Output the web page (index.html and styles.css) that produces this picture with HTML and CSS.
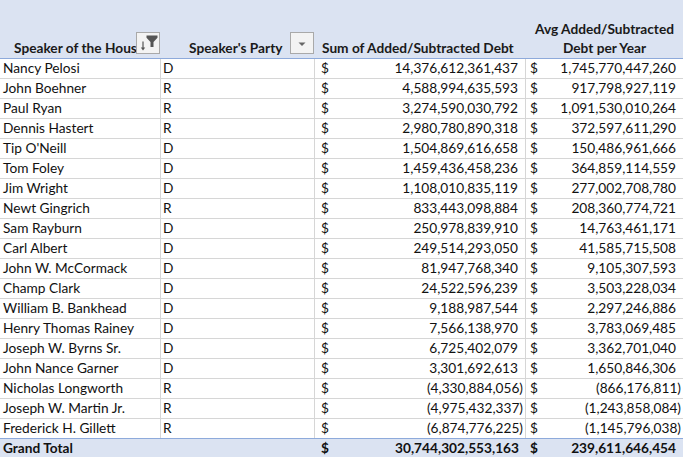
FILE: index.html
```html
<!DOCTYPE html>
<html>
<head>
<meta charset="utf-8">
<link rel="stylesheet" href="styles.css">
</head>
<body>
<table class="pivot">
  <colgroup>
    <col class="c-name"><col class="c-party"><col class="c-sum"><col class="c-avg">
  </colgroup>
  <thead>
    <tr>
      <th class="h-name"><span class="hl">Speaker of the House</span>
        <span class="fbtn">
          <svg width="22" height="20" viewBox="1 1 22 20"><path d="M10.5 3.5h11v2.2l-4 4.3v5h-3v-5l-4-4.3z" fill="#555"/><path d="M7 9.5v7.5" stroke="#555" stroke-width="1.2"/><path d="M4.8 15.5l2.2 3 2.2-3z" fill="#555"/></svg>
        </span>
      </th>
      <th class="h-party"><span class="hl">Speaker's Party</span>
        <span class="fbtn">
          <svg width="22" height="20" viewBox="1 1 22 20"><path d="M8.5 10.5h7l-3.5 3.5z" fill="#666"/></svg>
        </span>
      </th>
      <th class="h-sum">Sum of Added/Subtracted Debt</th>
      <th class="h-avg">Avg Added/Subtracted<br>Debt per Year</th>
    </tr>
  </thead>
  <tbody>
    <tr><td>Nancy Pelosi</td><td>D</td><td class="acct a3"><div class="ac"><span>$</span><span class="pos">14,376,612,361,437</span></div></td><td class="acct a4"><div class="ac"><span>$</span><span class="pos">1,745,770,447,260</span></div></td></tr>
    <tr><td>John Boehner</td><td>R</td><td class="acct a3"><div class="ac"><span>$</span><span class="pos">4,588,994,635,593</span></div></td><td class="acct a4"><div class="ac"><span>$</span><span class="pos">917,798,927,119</span></div></td></tr>
    <tr><td>Paul Ryan</td><td>R</td><td class="acct a3"><div class="ac"><span>$</span><span class="pos">3,274,590,030,792</span></div></td><td class="acct a4"><div class="ac"><span>$</span><span class="pos">1,091,530,010,264</span></div></td></tr>
    <tr><td>Dennis Hastert</td><td>R</td><td class="acct a3"><div class="ac"><span>$</span><span class="pos">2,980,780,890,318</span></div></td><td class="acct a4"><div class="ac"><span>$</span><span class="pos">372,597,611,290</span></div></td></tr>
    <tr><td>Tip O'Neill</td><td>D</td><td class="acct a3"><div class="ac"><span>$</span><span class="pos">1,504,869,616,658</span></div></td><td class="acct a4"><div class="ac"><span>$</span><span class="pos">150,486,961,666</span></div></td></tr>
    <tr><td>Tom Foley</td><td>D</td><td class="acct a3"><div class="ac"><span>$</span><span class="pos">1,459,436,458,236</span></div></td><td class="acct a4"><div class="ac"><span>$</span><span class="pos">364,859,114,559</span></div></td></tr>
    <tr><td>Jim Wright</td><td>D</td><td class="acct a3"><div class="ac"><span>$</span><span class="pos">1,108,010,835,119</span></div></td><td class="acct a4"><div class="ac"><span>$</span><span class="pos">277,002,708,780</span></div></td></tr>
    <tr><td>Newt Gingrich</td><td>R</td><td class="acct a3"><div class="ac"><span>$</span><span class="pos">833,443,098,884</span></div></td><td class="acct a4"><div class="ac"><span>$</span><span class="pos">208,360,774,721</span></div></td></tr>
    <tr><td>Sam Rayburn</td><td>D</td><td class="acct a3"><div class="ac"><span>$</span><span class="pos">250,978,839,910</span></div></td><td class="acct a4"><div class="ac"><span>$</span><span class="pos">14,763,461,171</span></div></td></tr>
    <tr><td>Carl Albert</td><td>D</td><td class="acct a3"><div class="ac"><span>$</span><span class="pos">249,514,293,050</span></div></td><td class="acct a4"><div class="ac"><span>$</span><span class="pos">41,585,715,508</span></div></td></tr>
    <tr><td>John W. McCormack</td><td>D</td><td class="acct a3"><div class="ac"><span>$</span><span class="pos">81,947,768,340</span></div></td><td class="acct a4"><div class="ac"><span>$</span><span class="pos">9,105,307,593</span></div></td></tr>
    <tr><td>Champ Clark</td><td>D</td><td class="acct a3"><div class="ac"><span>$</span><span class="pos">24,522,596,239</span></div></td><td class="acct a4"><div class="ac"><span>$</span><span class="pos">3,503,228,034</span></div></td></tr>
    <tr><td>William B. Bankhead</td><td>D</td><td class="acct a3"><div class="ac"><span>$</span><span class="pos">9,188,987,544</span></div></td><td class="acct a4"><div class="ac"><span>$</span><span class="pos">2,297,246,886</span></div></td></tr>
    <tr><td>Henry Thomas Rainey</td><td>D</td><td class="acct a3"><div class="ac"><span>$</span><span class="pos">7,566,138,970</span></div></td><td class="acct a4"><div class="ac"><span>$</span><span class="pos">3,783,069,485</span></div></td></tr>
    <tr><td>Joseph W. Byrns Sr.</td><td>D</td><td class="acct a3"><div class="ac"><span>$</span><span class="pos">6,725,402,079</span></div></td><td class="acct a4"><div class="ac"><span>$</span><span class="pos">3,362,701,040</span></div></td></tr>
    <tr><td>John Nance Garner</td><td>D</td><td class="acct a3"><div class="ac"><span>$</span><span class="pos">3,301,692,613</span></div></td><td class="acct a4"><div class="ac"><span>$</span><span class="pos">1,650,846,306</span></div></td></tr>
    <tr><td>Nicholas Longworth</td><td>R</td><td class="acct a3"><div class="ac"><span>$</span><span>(4,330,884,056)</span></div></td><td class="acct a4"><div class="ac"><span>$</span><span>(866,176,811)</span></div></td></tr>
    <tr><td>Joseph W. Martin Jr.</td><td>R</td><td class="acct a3"><div class="ac"><span>$</span><span>(4,975,432,337)</span></div></td><td class="acct a4"><div class="ac"><span>$</span><span>(1,243,858,084)</span></div></td></tr>
    <tr><td>Frederick H. Gillett</td><td>R</td><td class="acct a3"><div class="ac"><span>$</span><span>(6,874,776,225)</span></div></td><td class="acct a4"><div class="ac"><span>$</span><span>(1,145,796,038)</span></div></td></tr>
  </tbody>
  <tfoot>
    <tr><td>Grand Total</td><td></td><td class="acct a3"><div class="ac"><span>$</span><span class="pos">30,744,302,553,163</span></div></td><td class="acct a4"><div class="ac"><span>$</span><span class="pos">239,611,646,454</span></div></td></tr>
  </tfoot>
</table>
</body>
</html>
```

FILE: styles.css
```css
html, body {
  margin: 0;
  padding: 0;
  background: #ffffff;
}

body {
  font-family: Lato, "Open Sans", "Liberation Sans", sans-serif;
  font-size: 13.7px;
  color: #111;
}

.pivot {
  border-collapse: separate;
  border-spacing: 0;
  table-layout: fixed;
  width: 683px;
}

.c-name { width: 161px; }
.c-party { width: 154px; }
.c-sum { width: 211px; }
.c-avg { width: 157px; }

.pivot th {
  background: #dbe3f2;
  height: 59px;
  box-sizing: border-box;
  border-bottom: 1px solid #8eaadb;
  vertical-align: bottom;
  padding: 0 0 1px 0;
  font-weight: bold;
  line-height: 19px;
  white-space: nowrap;
  position: relative;
  overflow: hidden;
  text-align: left;
  color: #1a1a1a;
}

.pivot th.h-name { padding-left: 14px; }
.pivot th.h-party { padding-left: 28px; }
.pivot th.h-sum { padding-left: 7px; }
.pivot th.h-avg { text-align: center; }

.fbtn {
  position: absolute;
  right: 1px;
  bottom: 4px;
  width: 24px;
  height: 22px;
  box-sizing: border-box;
  border: 1px solid #a9a9a9;
  background: #f3f3f3;
  display: flex;
  align-items: center;
  justify-content: center;
}

.fbtn svg { display: block; }

.pivot td {
  height: 20px;
  box-sizing: border-box;
  padding: 0 3px;
  line-height: 18px;
  border-right: 1px solid #d6d6d6;
  border-bottom: 1px solid #d6d6d6;
  white-space: nowrap;
  overflow: hidden;
  vertical-align: top;
}

.pivot td:nth-child(2) { padding-left: 2px; }

.pivot td:last-child { border-right: none; }

.pivot tbody tr:last-child td { border-bottom: none; height: 19px; }

.pivot tfoot td {
  background: #dbe3f2;
  border-top: 1px solid #8eaadb;
  border-right: none;
  border-bottom: none;
  font-weight: bold;
}

.pivot td.a3 { padding: 0 2px 0 6px; }
.pivot td.a4 { padding: 0 2px 0 4px; }

.ac {
  display: flex;
  justify-content: space-between;
}

.pos { padding-right: 5px; }
```
